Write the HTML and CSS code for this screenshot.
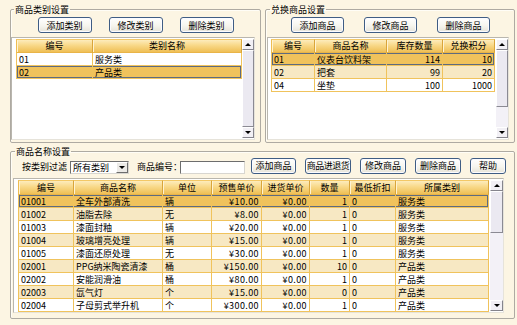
FILE: index.html
```html
<!DOCTYPE html>
<html lang="zh-CN">
<head>
<meta charset="utf-8">
<title>商品设置</title>
<link rel="stylesheet" href="styles.css">
</head>
<body>
<div class="app">
  <div class="top">
    <fieldset class="group group-cat">
      <legend>商品类别设置</legend>
      <div class="btnrow btnrow-cat">
        <button class="btn">添加类别</button>
        <button class="btn">修改类别</button>
        <button class="btn">删除类别</button>
      </div>
      <div class="grid grid-cat">
        <table class="tbl tbl-cat">
          <thead><tr><th>编号</th><th>类别名称</th></tr></thead>
          <tbody>
            <tr><td>01</td><td>服务类</td></tr>
            <tr class="sel"><td>02</td><td>产品类</td></tr>
          </tbody>
        </table>
        <div class="vs">
          <div class="vs-btn up"></div>
          <div class="thumb fill"></div>
          <div class="vs-btn down"></div>
        </div>
      </div>
    </fieldset>

    <fieldset class="group group-exch">
      <legend>兑换商品设置</legend>
      <div class="btnrow btnrow-exch">
        <button class="btn">添加商品</button>
        <button class="btn">修改商品</button>
        <button class="btn">删除商品</button>
      </div>
      <div class="grid grid-exch">
        <table class="tbl tbl-exch">
          <thead><tr><th>编号</th><th>商品名称</th><th>库存数量</th><th>兑换积分</th></tr></thead>
          <tbody>
            <tr class="sel"><td>01</td><td>仪表台饮料架</td><td class="r">114</td><td class="r">10</td></tr>
            <tr class="alt"><td>02</td><td>把套</td><td class="r">99</td><td class="r">20</td></tr>
            <tr><td>04</td><td>坐垫</td><td class="r">100</td><td class="r">1000</td></tr>
          </tbody>
        </table>
        <div class="vs">
          <div class="vs-btn up"></div>
          <div class="thumb thumb-exch"></div>
          <div class="track"></div>
          <div class="vs-btn down"></div>
        </div>
      </div>
    </fieldset>
  </div>

  <fieldset class="group group-goods">
    <legend>商品名称设置</legend>
    <div class="filter">
      <span class="lbl lbl-filter">按类别过滤</span>
      <div class="combo"><span class="combo-text">所有类别</span><span class="combo-btn"></span></div>
      <span class="lbl lbl-code">商品编号：</span>
      <div class="textbox"></div>
      <button class="btn b-add">添加商品</button>
      <button class="btn b-mid b-tight">商品进退货</button>
      <button class="btn b-mid">修改商品</button>
      <button class="btn b-mid">删除商品</button>
      <button class="btn b-help">帮助</button>
    </div>
    <div class="grid grid-goods">
      <table class="tbl tbl-goods">
        <thead><tr><th>编号</th><th>商品名称</th><th>单位</th><th>预售单价</th><th>进货单价</th><th>数量</th><th>最低折扣</th><th>所属类别</th></tr></thead>
        <tbody>
          <tr class="sel"><td>01001</td><td>全车外部清洗</td><td>辆</td><td class="r m">¥10.00</td><td class="r m">¥0.00</td><td class="r">1</td><td>0</td><td>服务类</td></tr>
          <tr class="alt"><td>01002</td><td>油脂去除</td><td>无</td><td class="r m">¥8.00</td><td class="r m">¥0.00</td><td class="r">1</td><td>0</td><td>服务类</td></tr>
          <tr><td>01003</td><td>漆面封釉</td><td>辆</td><td class="r m">¥20.00</td><td class="r m">¥0.00</td><td class="r">1</td><td>0</td><td>服务类</td></tr>
          <tr class="alt"><td>01004</td><td>玻璃增亮处理</td><td>辆</td><td class="r m">¥15.00</td><td class="r m">¥0.00</td><td class="r">1</td><td>0</td><td>服务类</td></tr>
          <tr><td>01005</td><td>漆面还原处理</td><td>无</td><td class="r m">¥30.00</td><td class="r m">¥0.00</td><td class="r">1</td><td>0</td><td>服务类</td></tr>
          <tr class="alt"><td>02001</td><td>PPG纳米陶瓷清漆</td><td>桶</td><td class="r m">¥150.00</td><td class="r m">¥0.00</td><td class="r">10</td><td>0</td><td>产品类</td></tr>
          <tr><td>02002</td><td>安能润滑油</td><td>桶</td><td class="r m">¥80.00</td><td class="r m">¥0.00</td><td class="r">1</td><td>0</td><td>产品类</td></tr>
          <tr class="alt"><td>02003</td><td>氙气灯</td><td>个</td><td class="r m">¥15.00</td><td class="r m">¥0.00</td><td class="r">0</td><td>0</td><td>产品类</td></tr>
          <tr><td>02004</td><td>子母剪式举升机</td><td>个</td><td class="r m">¥300.00</td><td class="r m">¥0.00</td><td class="r">1</td><td>0</td><td>产品类</td></tr>
        </tbody>
      </table>
      <div class="vs vs-goods">
        <div class="vs-btn up"></div>
        <div class="thumb thumb-goods"></div>
        <div class="track"></div>
        <div class="vs-btn down"></div>
      </div>
    </div>
  </fieldset>
</div>
</body>
</html>
```

FILE: styles.css
```css
* { box-sizing: border-box; }
html, body { margin: 0; padding: 0; }
body {
  width: 517px;
  height: 325px;
  overflow: hidden;
  background: #fcf5e3;
  font-family: "Noto Sans CJK SC", "Liberation Sans", sans-serif;
  font-size: 9px;
  color: #000;
}
.app { padding: 4px 2px 0 10px; }
.top { display: flex; gap: 4px; }

.group {
  margin: 0;
  min-width: 0;
  border: 1px solid #aeaaa2;
  border-radius: 2px;
  box-shadow: inset 1px 1px 0 #fffdf6;
  padding: 2px 0 2px 0;
}
.group legend {
  margin-left: 3px;
  padding: 0 1px;
  font-size: 9px;
  line-height: 11px;
}
.group-cat { width: 251px; }
.group-exch { width: 250px; padding-left: 1px; }
.group-goods { margin-top: 3px; padding: 0 0 5px 1px; }

/* buttons */
.btnrow { display: flex; justify-content: center; height: 16px; }
.btnrow-cat { gap: 17px; }
.btnrow-cat .btn { width: 54px; }
.btnrow-exch { gap: 20px; }
.btnrow-exch .btn { width: 53px; }
.btn {
  height: 16px;
  margin: 0;
  padding: 0;
  font-family: inherit;
  font-size: 9px;
  line-height: 13px;
  color: #000;
  border: 1px solid #3f5d84;
  border-radius: 3px;
  background: linear-gradient(#ffffff, #f6f5ee 55%, #e6e3d8);
  box-shadow: inset 0 0 0 1px #fbfbff;
  white-space: nowrap;
  overflow: hidden;
}

/* filter row */
.filter { display: flex; align-items: center; height: 17px; }
.lbl { line-height: 12px; margin-top: 3px; white-space: nowrap; }
.lbl-filter { margin-left: 10px; width: 48px; }
.combo {
  margin-top: 3px;
  width: 59px;
  height: 13px;
  display: flex;
  background: #fff;
  border: 1px solid;
  border-color: #6d6d6d #d8d6d0 #d8d6d0 #6d6d6d;
}
.combo-text { flex: 1; padding-left: 2px; line-height: 11px; }
.combo-btn {
  width: 12px;
  background: #eceae6;
  border: 1px solid;
  border-color: #fff #6d6d6d #6d6d6d #fff;
  display: flex;
  align-items: center;
  justify-content: center;
}
.combo-btn::after {
  content: "";
  border-left: 3px solid transparent;
  border-right: 3px solid transparent;
  border-top: 3px solid #000;
}
.lbl-code { margin-left: 8px; width: 43px; }
.textbox {
  margin-top: 3px;
  width: 65px;
  height: 13px;
  background: #fff;
  border: 1px solid;
  border-color: #6d6d6d #d8d6d0 #d8d6d0 #6d6d6d;
}
.filter .btn { margin-left: 9px; }
.filter .b-add { margin-left: 6px; width: 45px; }
.filter .b-mid { width: 46px; }
.filter .b-tight { letter-spacing: -0.5px; }
.filter .b-help { width: 36px; }

/* grids */
.grid {
  display: flex;
  align-items: stretch;
  margin-top: 4px;
  background: #fff;
  border: 1px solid;
  border-color: #b9b6ae #e6e3da #e6e3da #b9b6ae;
  padding: 1px 0 1px 4px;
}
.grid-cat { width: 244px; height: 103px; }
.grid-exch { width: 242px; height: 103px; padding-left: 3px; }
.grid-goods { width: 491px; height: 135px; margin-left: 1px; }

.tbl {
  border-collapse: separate;
  border-spacing: 0;
  table-layout: fixed;
  align-self: flex-start;
  font-size: 9px;
}
.tbl-cat { width: 226px; }
.tbl-cat th:nth-child(1) { width: 77px; }
.tbl-cat th:nth-child(2) { width: 149px; }
.tbl-exch { width: 224px; }
.tbl-exch th:nth-child(1) { width: 44px; }
.tbl-exch th:nth-child(2) { width: 72px; }
.tbl-exch th:nth-child(3) { width: 56px; }
.tbl-exch th:nth-child(4) { width: 52px; }
.tbl-goods { width: 471px; }
.tbl-goods th:nth-child(1) { width: 56px; }
.tbl-goods th:nth-child(2) { width: 89px; }
.tbl-goods th:nth-child(3) { width: 49px; }
.tbl-goods th:nth-child(4) { width: 50px; }
.tbl-goods th:nth-child(5) { width: 48px; }
.tbl-goods th:nth-child(6) { width: 40px; }
.tbl-goods th:nth-child(7) { width: 46px; }
.tbl-goods th:nth-child(8) { width: 93px; }

.tbl th {
  height: 14px;
  padding: 0;
  font-weight: normal;
  text-align: center;
  line-height: 12px;
  white-space: nowrap;
  overflow: hidden;
  background: linear-gradient(#fdecbc, #f8d888 45%, #efbf55);
  border-top: 1px solid #f3c866;
  border-right: 1px solid #d9a53a;
  border-bottom: 1px solid #e9b447;
  box-shadow: inset 1px 0 0 #fff3d2;
}
.tbl th:first-child { border-left: 1px solid #eebd52; }
.tbl-goods th { height: 15px; }

.tbl td {
  height: 13px;
  padding: 0 2px;
  line-height: 11px;
  white-space: nowrap;
  overflow: hidden;
  border-right: 1px solid #f0c35c;
  border-bottom: 1px solid #f0c35c;
  background: #fff;
}
.tbl td:first-child { border-left: 1px solid #f0c35c; }
.tbl td.r { text-align: right; }
.tbl td.m { letter-spacing: 0.4px; }
.tbl tr.alt td { background: #f7e8c3; }
.tbl tr.sel td {
  background: #f0c25c;
  box-shadow: inset 0 1px 0 #5e6b80, inset 0 -1px 0 #5e6b80;
}
.tbl tr.sel td:first-child {
  box-shadow: inset 0 1px 0 #5e6b80, inset 0 -1px 0 #5e6b80, inset 1px 0 0 #5e6b80;
}
.tbl tr.sel td:last-child {
  box-shadow: inset 0 1px 0 #5e6b80, inset 0 -1px 0 #5e6b80, inset -1px 0 0 #5e6b80;
}

/* scrollbars */
.vs {
  flex: none;
  width: 12px;
  margin-left: auto;
  display: flex;
  flex-direction: column;
  background: #f3f1f7;
}
.vs-goods { width: 13px; }
.vs-btn {
  flex: none;
  height: 11px;
  background: #f2f0f5;
  border: 1px solid;
  border-color: #ffffff #85848c #85848c #ffffff;
  display: flex;
  align-items: center;
  justify-content: center;
}
.vs-btn::after {
  content: "";
  border-left: 3px solid transparent;
  border-right: 3px solid transparent;
}
.vs-btn.up::after { border-bottom: 3px solid #000; }
.vs-btn.down::after { border-top: 3px solid #000; }
.thumb {
  flex: none;
  background: #ebe9f1;
  border: 1px solid;
  border-color: #ffffff #8b8a93 #8b8a93 #ffffff;
}
.thumb.fill { flex: 1; }
.thumb-exch { height: 57px; }
.thumb-goods { height: 42px; }
.track { flex: 1; }
```
